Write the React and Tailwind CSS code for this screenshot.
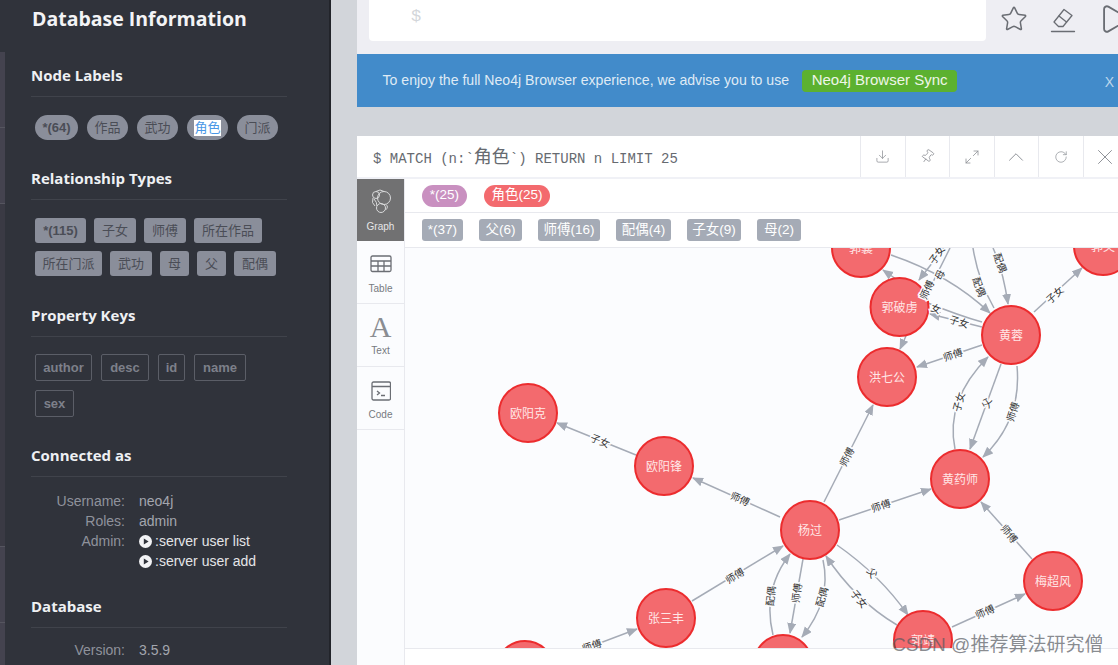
import React from 'react';
import { Star, Play, Download, Pin, Maximize2, ChevronUp, RotateCw, X } from 'lucide-react';

const cjk = "font-['Liberation_Sans','Noto_Sans_CJK_SC',sans-serif]";

const nodeLabels = [
  { text: '*(64)', w: 'w-[43px]', weight: 'font-bold' },
  { text: '作品', w: 'w-[41px]', weight: 'font-normal' },
  { text: '武功', w: 'w-[41px]', weight: 'font-normal' },
  { text: '角色', w: 'w-[41px]', weight: 'font-normal', selected: true },
  { text: '门派', w: 'w-[41px]', weight: 'font-normal' },
];

const relTypes = [
  { text: '*(115)', w: 'w-[51px]', weight: 'font-bold' },
  { text: '子女', w: 'w-[42px]', weight: 'font-normal' },
  { text: '师傅', w: 'w-[42px]', weight: 'font-normal' },
  { text: '所在作品', w: 'w-[68px]', weight: 'font-normal' },
  { text: '所在门派', w: 'w-[67px]', weight: 'font-normal' },
  { text: '武功', w: 'w-[42px]', weight: 'font-normal' },
  { text: '母', w: 'w-[29px]', weight: 'font-normal' },
  { text: '父', w: 'w-[29px]', weight: 'font-normal' },
  { text: '配偶', w: 'w-[42px]', weight: 'font-normal' },
];

const propKeys = [
  { text: 'author', w: 'w-[57px]' },
  { text: 'desc', w: 'w-[48px]' },
  { text: 'id', w: 'w-[27px]' },
  { text: 'name', w: 'w-[52px]' },
  { text: 'sex', w: 'w-[39px]' },
];

const nodes = [
  { name: '郭襄', x: 861, y: 248 },
  { name: '郭芙', x: 1103, y: 246 },
  { name: '郭破虏', x: 899.5, y: 307 },
  { name: '黄蓉', x: 1011, y: 335 },
  { name: '洪七公', x: 887, y: 377 },
  { name: '欧阳克', x: 528, y: 413 },
  { name: '欧阳锋', x: 664, y: 466 },
  { name: '杨过', x: 810, y: 530 },
  { name: '黄药师', x: 960, y: 479 },
  { name: '梅超风', x: 1053, y: 581 },
  { name: '张三丰', x: 666, y: 618 },
  { name: '郭靖', x: 923, y: 640 },
  { name: '', x: 525, y: 670 },
  { name: '', x: 783, y: 664 },
];

// d is in page coordinates, the svg viewBox lines up with the page
const edges = [
  { d: 'M636 455 L557 423', label: '子女', x: 600, y: 441, r: 22 },
  { d: 'M780 517 L693 478', label: '师傅', x: 740, y: 499, r: 24 },
  { d: 'M692 601 L783 546', label: '师傅', x: 735, y: 576, r: -31 },
  { d: 'M555 660 L637 629', label: '师傅', x: 592, y: 646, r: -18 },
  { d: 'M824 502 L873 405', label: '师傅', x: 847, y: 457, r: -62 },
  { d: 'M839 520 L931 489', label: '师傅', x: 881, y: 506, r: -18 },
  { d: 'M1032 559 L981 502', label: '师傅', x: 1009, y: 534, r: 50 },
  { d: 'M952 627 L1025 594', label: '师傅', x: 985, y: 612, r: -24 },
  { d: 'M837 545 Q880 575 908 615', label: '父', x: 872, y: 573, r: 55 },
  { d: 'M897 625 Q855 600 826 556', label: '子女', x: 859, y: 599, r: 50 },
  { d: 'M803 559 L790 633', label: '师傅', x: 797, y: 593, r: -82 },
  { d: 'M773 635 Q762 590 790 554', label: '配偶', x: 771, y: 596, r: -85 },
  { d: 'M823 560 Q832 600 802 637', label: '配偶', x: 822, y: 597, r: -75 },
  { d: 'M1001 364 L970 449', label: '父', x: 987, y: 403, r: -70 },
  { d: 'M1017 366 Q1022 420 983 457', label: '师傅', x: 1013, y: 412, r: -72 },
  { d: 'M955 449 Q945 400 988 357', label: '子女', x: 959, y: 402, r: -75 },
  { d: 'M982 345 L917 367', label: '师傅', x: 953, y: 355, r: -18 },
  { d: 'M982 327 L930 314', label: '子女', x: 959, y: 322, r: 17 },
  { d: 'M982 322 Q960 316 928 303', nohead: true },
  { d: 'M906 336 L900 349' },
  { d: 'M896 279 L883 270' },
  { d: 'M891 255 Q950 275 990 313' },
  { d: 'M950 240 L919 280', label: '子女', x: 937, y: 255, r: -55 },
  { d: 'M950 248 L925 298', nohead: true, label: '母', x: 940, y: 275, r: -65 },
  { d: 'M994 308 Q978 280 973 248', nohead: true, label: '配偶', x: 979, y: 287, r: 70 },
  { d: 'M993 248 Q1003 270 1008 304', label: '配偶', x: 1000, y: 263, r: 70 },
  { d: 'M1034 312 L1082 268', label: '子女', x: 1055, y: 295, r: -42 },
];

// these two sit on top of the 郭破虏 node
const overlayLabels = [
  { label: '师傅', x: 927, y: 290, r: -65 },
  { label: '女', x: 936, y: 309, r: 20 },
];

function EdgeLabel({ label, x, y, r }) {
  return (
    <text
      x={x}
      y={y}
      transform={`rotate(${r} ${x} ${y})`}
      textAnchor="middle"
      dominantBaseline="central"
      fontSize="10"
      fill="#333"
      stroke="#fbfcfe"
      strokeWidth="3"
      paintOrder="stroke"
    >
      {label}
    </text>
  );
}

function Section({ title, children, className }) {
  return (
    <div className={className}>
      <div className="h-[37px] w-[256px] border-b border-[#40434b] text-[15px] leading-[30px] font-bold text-[#eef0f3] font-['Open_Sans',sans-serif]">
        {title}
      </div>
      {children}
    </div>
  );
}

function InfoRow({ label, children }) {
  return (
    <div className="flex h-5 items-center text-[14px] font-['Liberation_Sans',sans-serif]">
      <div className="w-[94px] text-right text-[#8f929b]">{label}</div>
      <div className="ml-[14px] flex items-center text-[#a3a6ae]">{children}</div>
    </div>
  );
}

function PlayLink({ text }) {
  return (
    <span className="flex items-center text-[#e4e5e8]">
      <svg width="13" height="13" viewBox="0 0 13 13" className="mr-[3px]">
        <circle cx="6.5" cy="6.5" r="6.5" fill="#f2f3f5" />
        <path d="M4.8 3.4 L9.6 6.5 L4.8 9.6 Z" fill="#30333b" />
      </svg>
      {text}
    </span>
  );
}

function Sidebar() {
  return (
    <div className="h-full w-[326px] shrink-0 border-r-2 border-[#22242a] bg-[#30333b] pl-[26px]">
      <div className="h-[60px] pt-[3px] pl-px text-[19.5px] leading-[32px] font-bold text-[#f3f4f6] font-['Open_Sans',sans-serif]">
        Database Information
      </div>
      <Section title="Node Labels">
        <div className={`mt-[18px] flex gap-[9px] pl-1 text-[13px] text-[#4a4d56] ${cjk}`}>
          {nodeLabels.map((l) => (
            <div key={l.text} className={`flex h-[25px] items-center justify-center rounded-full bg-[#8a8e9a] ${l.w} ${l.weight}`}>
              {l.selected ? <span className="bg-white leading-[16px] text-[#4a98e6]">{l.text}</span> : l.text}
            </div>
          ))}
        </div>
      </Section>
      <Section title="Relationship Types" className="mt-[23px]">
        <div className={`mt-[18px] flex w-[256px] flex-wrap gap-x-[8px] gap-y-[8px] pl-1 text-[13px] text-[#4a4d56] ${cjk}`}>
          {relTypes.map((l) => (
            <div key={l.text} className={`flex h-[25px] items-center justify-center rounded-[3px] bg-[#8a8e9a] ${l.w} ${l.weight}`}>
              {l.text}
            </div>
          ))}
        </div>
      </Section>
      <Section title="Property Keys" className="mt-[24px]">
        <div className="mt-[17px] flex w-[256px] flex-wrap gap-x-[9px] gap-y-[9px] pl-1 text-[13px] font-bold text-[#7d808a] font-['Liberation_Sans',sans-serif]">
          {propKeys.map((l) => (
            <div key={l.text} className={`flex h-[27px] items-center justify-center rounded-[2px] border border-[#5b5e67] ${l.w}`}>
              {l.text}
            </div>
          ))}
        </div>
      </Section>
      <Section title="Connected as" className="mt-[23px]">
        <div className="mt-[14px]">
          <InfoRow label="Username:">neo4j</InfoRow>
          <InfoRow label="Roles:">admin</InfoRow>
          <InfoRow label="Admin:"><PlayLink text=":server user list" /></InfoRow>
          <InfoRow label=""><PlayLink text=":server user add" /></InfoRow>
        </div>
      </Section>
      <Section title="Database" className="mt-[20px]">
        <div className="mt-[12px]">
          <InfoRow label="Version:">3.5.9</InfoRow>
        </div>
      </Section>
    </div>
  );
}

function LeftStrip() {
  return (
    <div className="flex h-full w-[5px] shrink-0 flex-col bg-[#30333b]">
      <div className="mt-[52px] h-[76px] border-b border-[#55555f] bg-[#44434f]" />
      <div className="h-[76px] border-b border-[#55555f] bg-[#44434f]" />
      <div className="h-[343px] border-b border-[#55555f] bg-[#3a3a44]" />
      <div className="h-[76px] border-b border-[#55555f] bg-[#44434f]" />
      <div className="flex-1 bg-[#44434f]" />
    </div>
  );
}

function EraserIcon() {
  return (
    <svg width="28" height="28" viewBox="0 0 28 28" fill="none" stroke="#6a6d73" strokeWidth="1.3" strokeLinejoin="round" strokeLinecap="round">
      <path d="M5 17 L15 4.5 L23 10.5 L14 21.5 L9.5 21.5 Z" />
      <path d="M10 11 L17.5 17" />
      <path d="M2.5 26.5 L25.5 26.5" />
    </svg>
  );
}

function TopBar() {
  return (
    <div className="flex h-[54px] w-[790px] items-start bg-[#eeeef3] pl-3">
      <div className="flex h-[41px] w-[617px] rounded-b-[4px] bg-white pl-[42px] pt-[3px] text-[17px] leading-[28px] text-[#d3d6da] font-['Liberation_Mono',monospace]">
        $
      </div>
      <div className="ml-[14px] mt-[2px] flex items-center gap-[21px]">
        <Star size={28} strokeWidth={1.3} className="text-[#6a6d73]" />
        <EraserIcon />
        <Play size={34} strokeWidth={1.3} className="-ml-[1px] text-[#6a6d73]" />
      </div>
    </div>
  );
}

function Banner() {
  return (
    <div className="relative flex h-[53px] w-[761px] items-center bg-[#428bca] pl-[25.5px] text-[14.1px] text-[#dfeaf5] font-['Liberation_Sans',sans-serif]">
      <span>To enjoy the full Neo4j Browser experience, we advise you to use</span>
      <span className="ml-[13px] flex h-[22px] w-[155px] items-center justify-center rounded-[4px] bg-[#5cb130] text-[15px] text-[#eef6e8]">
        Neo4j Browser Sync
      </span>
      <span className="absolute right-[4px] top-[18px] text-[14px] text-[#bcd6ec]">X</span>
    </div>
  );
}

function HeaderBtn({ children }) {
  return (
    <div className="flex h-full w-[44.5px] shrink-0 items-center justify-center border-l border-[#e8e9ee] text-[#8d9096]">
      {children}
    </div>
  );
}

function FrameHeader() {
  return (
    <div className="flex h-[43px] items-center border-b-2 border-[#f0f1f6]">
      <div className="w-[503px] shrink-0 pl-4 pt-[3px] text-[14px] text-[#666a70] font-['Liberation_Mono','Noto_Sans_CJK_SC',monospace]">
        $ MATCH (n:`<span className="text-[18px]">角色</span>`) RETURN n LIMIT 25
      </div>
      <HeaderBtn><Download size={15} strokeWidth={1.2} /></HeaderBtn>
      <HeaderBtn><Pin size={15} strokeWidth={1.2} className="rotate-[35deg]" /></HeaderBtn>
      <HeaderBtn><Maximize2 size={16} strokeWidth={1.2} /></HeaderBtn>
      <HeaderBtn><ChevronUp size={26} strokeWidth={0.9} /></HeaderBtn>
      <HeaderBtn><RotateCw size={14} strokeWidth={1.2} /></HeaderBtn>
      <HeaderBtn><X size={26} strokeWidth={0.9} /></HeaderBtn>
    </div>
  );
}

function GraphIcon() {
  return (
    <svg width="22" height="26" viewBox="0 0 22 26" fill="none" stroke="#d9dadb" strokeWidth="1">
      <circle cx="14" cy="10" r="6.5" />
      <circle cx="6" cy="7" r="3.5" />
      <circle cx="11" cy="20" r="4.5" />
      <path d="M3 10 Q1 15 5 18 M6 3.5 Q10 0.5 14 3.5 M16 16.5 Q19 19 15.5 22 M4 11 Q7 14 7 18" />
    </svg>
  );
}

function TableIcon() {
  return (
    <svg width="22" height="18" viewBox="0 0 22 18" fill="none" stroke="#6b6e74" strokeWidth="1.3">
      <rect x="1" y="1" width="20" height="15.5" rx="1.5" />
      <path d="M1 6 H21 M1 11 H21 M8 6 V16.5 M14 6 V16.5" />
    </svg>
  );
}

function CodeIcon() {
  return (
    <svg width="20" height="20" viewBox="0 0 20 20" fill="none" stroke="#6b6e74" strokeWidth="1.3">
      <rect x="1" y="1" width="18.5" height="18" rx="1.5" />
      <path d="M1 5.5 H19.5 M6 10 L8.5 12 L6 14 M10 14.5 H14" />
    </svg>
  );
}

function SideTabs() {
  return (
    <div className="flex w-[48px] shrink-0 flex-col border-r border-[#e8e9ee] bg-[#fbfcfe] text-[10px] text-[#777a80] font-['Liberation_Sans',sans-serif]">
      <div className="flex h-[62px] flex-col items-center justify-center bg-[#717172] pt-[2px] text-[#e6e6e7]">
        <GraphIcon />
        <span className="mt-[5px]">Graph</span>
      </div>
      <div className="flex h-[63px] flex-col items-center justify-center border-b border-[#e8e9ee] pt-[7px]">
        <TableIcon />
        <span className="mt-[8px]">Table</span>
      </div>
      <div className="flex h-[63px] flex-col items-center justify-center border-b border-[#e8e9ee] pt-[2px]">
        <span className="text-[30px] leading-[26px] text-[#8a8d92] font-['Liberation_Serif',serif]">A</span>
        <span className="mt-[3px]">Text</span>
      </div>
      <div className="flex h-[63px] flex-col items-center justify-center border-b border-[#e8e9ee] pt-[6px]">
        <CodeIcon />
        <span className="mt-[6px]">Code</span>
      </div>
    </div>
  );
}

function GraphCanvas() {
  return (
    <svg width="713" height="400" viewBox="405 248 713 400" className={`block bg-[#fbfcfe] ${cjk}`}>
      <defs>
        <marker id="arrow" markerWidth="12" markerHeight="10" refX="10" refY="4.5" orient="auto" markerUnits="userSpaceOnUse">
          <path d="M0 0 L11 4.5 L0 9 Z" fill="#a5abb6" />
        </marker>
      </defs>
      {edges.map((e, i) => (
        <g key={i}>
          <path d={e.d} fill="none" stroke="#a5abb6" strokeWidth="1.5" markerEnd={e.nohead ? undefined : 'url(#arrow)'} />
          {e.label && <EdgeLabel label={e.label} x={e.x} y={e.y} r={e.r} />}
        </g>
      ))}
      {nodes.map((n, i) => (
        <g key={i}>
          <circle cx={n.x} cy={n.y} r="29" fill="#f36a6e" stroke="#ec2c2e" strokeWidth="2" />
          <text x={n.x} y={n.y + 1} textAnchor="middle" dominantBaseline="central" fontSize="12" fill="#ffe6e6">
            {n.name}
          </text>
        </g>
      ))}
      {overlayLabels.map((l) => (
        <EdgeLabel key={l.label} label={l.label} x={l.x} y={l.y} r={l.r} />
      ))}
    </svg>
  );
}

function ResultFrame() {
  return (
    <div className="flex h-[529px] w-[761px] flex-col bg-white">
      <FrameHeader />
      <div className="flex flex-1">
        <SideTabs />
        <div className="flex flex-1 flex-col">
          <div className={`flex h-[34px] items-center gap-[17px] border-b border-[#e8e9ee] pl-[17px] text-[13.5px] text-white ${cjk}`}>
            <span className="flex h-[22px] w-[45px] items-center justify-center rounded-full bg-[#c990c0]">*(25)</span>
            <span className="flex h-[22px] w-[66px] items-center justify-center rounded-full bg-[#f36a6e]">角色(25)</span>
          </div>
          <div className={`flex h-[35px] items-center gap-[16px] border-b border-[#e8e9ee] pl-[17px] text-[13.5px] text-white ${cjk}`}>
            <span className="flex h-[22px] w-[41px] items-center justify-center rounded-[3px] bg-[#a5abb6]">*(37)</span>
            <span className="flex h-[22px] w-[43px] items-center justify-center rounded-[3px] bg-[#a5abb6]">父(6)</span>
            <span className="flex h-[22px] w-[62px] items-center justify-center rounded-[3px] bg-[#a5abb6]">师傅(16)</span>
            <span className="flex h-[22px] w-[55px] items-center justify-center rounded-[3px] bg-[#a5abb6]">配偶(4)</span>
            <span className="flex h-[22px] w-[54px] items-center justify-center rounded-[3px] bg-[#a5abb6]">子女(9)</span>
            <span className="flex h-[22px] w-[44px] items-center justify-center rounded-[3px] bg-[#a5abb6]">母(2)</span>
          </div>
          <GraphCanvas />
          <div className="flex-1 border-t border-[#e8e9ee] bg-white" />
        </div>
      </div>
    </div>
  );
}

export default function App() {
  return (
    <div className="relative flex h-[665px] w-[1118px] overflow-hidden bg-[#d2d5da]">
      <LeftStrip />
      <Sidebar />
      <div className="min-w-0 flex-1 pl-[26px]">
        <TopBar />
        <Banner />
        <div className="h-[29px]" />
        <ResultFrame />
      </div>
      <div className="absolute left-[892px] top-[632px] text-[19px] leading-[26px] whitespace-nowrap text-[#55585e]/70 font-['Liberation_Sans','Noto_Sans_CJK_SC',sans-serif]">
        CSDN @推荐算法研究僧
      </div>
    </div>
  );
}
